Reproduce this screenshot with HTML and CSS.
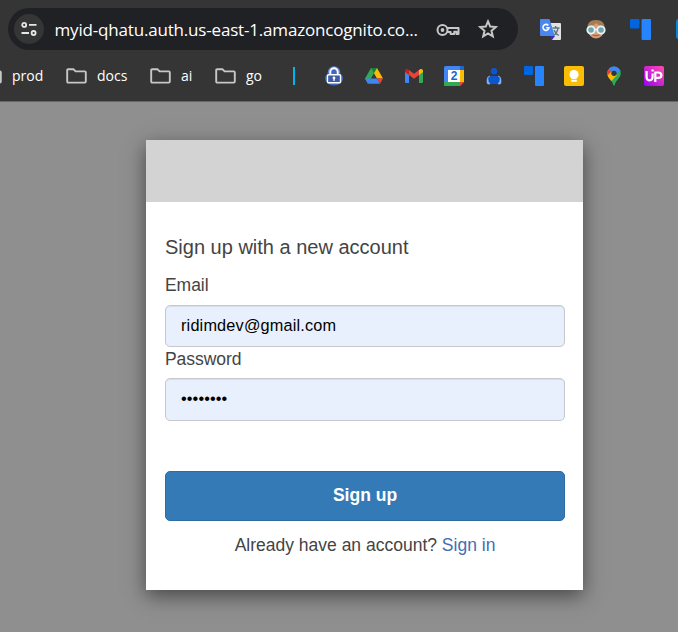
FILE: index.html
```html
<!DOCTYPE html>
<html lang="en">
<head>
<meta charset="utf-8">
<title>Signup</title>
<link rel="stylesheet" href="styles.css">
</head>
<body>
<svg class="defs" width="0" height="0">
  <symbol id="folder" viewBox="0 0 21 16"><path d="M1.2 2.2Q1.2 1.2 2.2 1.2H7.4L9.6 3.4H18.8Q19.8 3.4 19.8 4.4V13.6Q19.8 14.6 18.8 14.6H2.2Q1.2 14.6 1.2 13.6Z" fill="none" stroke="#c7c7c7" stroke-width="1.9"/></symbol>
  <symbol id="blocks" viewBox="0 0 20 20"><rect width="9" height="9" rx="1" fill="#0065e0"/><rect x="11" width="9" height="20" rx="1" fill="#2684ff"/></symbol>
</svg>
<header class="browser">
  <div class="toolbar">
    <div class="address">
      <span class="site-info">
        <svg width="16" height="16" viewBox="0 0 16 16" fill="none" stroke="#e6e6e6" stroke-width="1.8"><circle cx="3.2" cy="3.9" r="2"/><path d="M8 3.9H15.5M.5 12H8"/><circle cx="12.6" cy="12" r="2"/></svg>
      </span>
      <span class="url">myid-qhatu.auth.us-east-1.amazoncognito.co...</span>
      <svg class="key" width="24" height="14" viewBox="0 0 24 14" fill="none" stroke="#c7c7c7" stroke-width="2"><path d="M10.800 5H22.500V11H20.500V8.800H18.200V11H14.600V9H10.800" stroke-linejoin="round"/><circle cx="6.500" cy="7" r="5"/><circle cx="6.500" cy="7" r="1.900" fill="#c7c7c7" stroke="none"/></svg>
      <svg class="star" width="20" height="20" viewBox="0 0 20 20"><path d="M10 2.400L12.200 7.600L17.800 8.100L13.500 11.800L14.800 17.300L10 14.400L5.200 17.300L6.500 11.800L2.200 8.100L7.800 7.600Z" fill="none" stroke="#c7c7c7" stroke-width="2"/></svg>
    </div>
    <div class="extensions">
      <svg width="21" height="21" viewBox="0 0 21 21"><path d="M9 4H20Q21 4 21 5V20Q21 21 20 21H12Z" fill="#e2e2e2"/><path d="M12.5 9H19.500M15.7 7V9M18 9.2Q17 14.500 13.4 16.500M14 11Q15.2 14.500 18.8 16.500" fill="none" stroke="#5c7480" stroke-width="1.400"/><path d="M10 17H15L12 21Z" fill="#3929c0"/><path d="M1 0H9.500L14.8 17H1Q0 17 0 16V1Q0 0 1 0Z" fill="#4a86ee"/><path d="M8.300 6.400A3 3 0 1 0 9 8.700H6.200" fill="none" stroke="#fff" stroke-width="1.600"/></svg>
      <svg width="20" height="20" viewBox="0 0 20 20"><ellipse cx="10" cy="10.5" rx="8.3" ry="9" fill="#d9a078"/><path d="M1.3 10Q.7 1 10 1T18.7 10L16.5 7Q12 7 10.5 4Q8 7 3.5 7Z" fill="#a57c53"/><path d="M6 15.5Q10 18 14 15.5" stroke="#b4624d" stroke-width="1.3" fill="none"/><g fill="#71a4b0" stroke="#e5f6f7" stroke-width="1.800"><circle cx="5" cy="11" r="3.700"/><circle cx="15" cy="11" r="3.700"/></g><path d="M8.5 10.5H11.5" stroke="#e5f6f7" stroke-width="1.6"/></svg>
      <svg width="21" height="21"><use href="#blocks"/></svg>
      <svg width="20" height="20"><rect width="20" height="20" rx="2.5" fill="#0b84d8"/></svg>
    </div>
  </div>
  <nav class="bookmarks">
    <span class="folder f-prod"><svg width="21" height="16"><use href="#folder"/></svg><span class="name">prod</span></span>
    <span class="folder f-docs"><svg width="21" height="16"><use href="#folder"/></svg><span class="name">docs</span></span>
    <span class="folder f-ai"><svg width="21" height="16"><use href="#folder"/></svg><span class="name">ai</span></span>
    <span class="folder f-go"><svg width="21" height="16"><use href="#folder"/></svg><span class="name">go</span></span>
    <span class="divider"></span>
    <div class="apps">
      <svg width="20" height="20" viewBox="0 0 20 20"><circle cx="10" cy="6.500" r="6.300" fill="#5f84cf"/><ellipse cx="10" cy="12.500" rx="9" ry="6.900" fill="#4068bd"/><path d="M6.300 9V6A3.700 3.700 0 0 1 13.700 6V9" fill="#4068bd" stroke="#fff" stroke-width="1.900"/><rect x="3.500" y="8.800" width="13" height="8" rx="1" fill="#284c9c" stroke="#fff" stroke-width="1.500"/><path d="M5 11H15M5 13H15M5 15H15" stroke="#607dbc" stroke-width=".7"/><circle cx="10" cy="12" r="1.400" fill="#fff"/><path d="M10 12V15" stroke="#fff" stroke-width="1.200"/></svg>
      <svg width="20" height="20" viewBox="0 0 20 20"><path d="M7 2H13L10 7.2L4 17.7L1 12.5Z" fill="#34a853"/><path d="M7 2H13L10 7.2Z" fill="#188038"/><path d="M13 2L19 12.5H13L10 7.2Z" fill="#fbbc04"/><path d="M4 17.7L7 12.5H13L16 17.7Z" fill="#4285f4"/><path d="M1 12.5H7L4 17.7Z" fill="#4285f4"/><path d="M13 12.5H19L16 17.7Z" fill="#ea4335"/></svg>
      <svg width="20" height="20" viewBox="0 0 20 20"><path d="M1 5V16Q1 17 2 17H5V8Z" fill="#4285f4"/><path d="M15 8V17H18Q19 17 19 16V5Z" fill="#34a853"/><path d="M5 4L10 7.8L15 4V9L10 12.7L5 9Z" fill="#ea4335"/><path d="M1 5Q1 3 3 3Q4 3 5 4V9L1 6Z" fill="#c5221f"/><path d="M19 5Q19 3 17 3Q16 3 15 4V9L19 6Z" fill="#fbbc04"/></svg>
      <svg width="20" height="20" viewBox="0 0 20 20"><rect width="20" height="20" rx="1.5" fill="#4285f4"/><path d="M16 4H20V16H16Z" fill="#fbbc04"/><path d="M0 16H16V20H1.5Q0 20 0 18.5Z" fill="#34a853"/><path d="M16 0H18.5Q20 0 20 1.5V4H16Z" fill="#1967d2"/><path d="M20 16V20H16Z" fill="#353535"/><path d="M16 16H20L16 20Z" fill="#ea4335"/><path d="M4 4H16V16H4Z" fill="#fff"/><text x="10" y="14.2" text-anchor="middle" class="day">2</text></svg>
      <svg width="20" height="20" viewBox="0 0 20 20"><path d="M7 10H13Q17.500 10.500 16.500 18H3.500Q2.500 10.500 7 10Z" fill="#0b57d0"/><path d="M6 10Q3 10.500 4 14Q4 16 6 18H4Q3 18 3 16V14Q3 10.500 6 10ZM14 10Q17 10.500 16 14Q16 16 14 18H16Q17 18 17 16V14Q17 10.500 14 10Z" fill="#8ab4f8" stroke="#8ab4f8" stroke-width=".6"/><circle cx="10" cy="5.200" r="3.200" fill="#0b57d0"/></svg>
      <svg width="20" height="20"><use href="#blocks"/></svg>
      <svg width="20" height="20" viewBox="0 0 20 20"><rect width="20" height="20" rx="2" fill="#fbbc04"/><circle cx="10" cy="8.500" r="4.600" fill="#fff"/><path d="M7.200 10H12.800V12.500H7.200ZM7.200 13.800H12.800V15.700H7.200Z" fill="#fff"/></svg>
      <svg width="20" height="20" viewBox="0 0 20 20"><defs><clipPath id="pin"><path d="M10 .5A6.800 6.800 0 0 1 16.800 7.300C16.800 12 11.500 14.500 10.800 18.800Q10 20.500 9.200 18.800C8.500 14.500 3.200 12 3.200 7.300A6.800 6.800 0 0 1 10 .5Z"/></clipPath></defs><g clip-path="url(#pin)"><path d="M0 0H20V20H0Z" fill="#34a853"/><path d="M0 0H8L10 7L5 13L0 12Z" fill="#ea4335"/><path d="M5 0H20V3L10 9L4.500 2.500Z" fill="#4285f4"/><path d="M2 11L7 6L13 9L6.500 16Z" fill="#fbbc04"/></g><circle cx="10" cy="7.300" r="2.600" fill="#353535"/></svg>
      <svg width="20" height="20" viewBox="0 0 20 20"><defs><linearGradient id="up" x1="0" y1="1" x2="1" y2="0"><stop stop-color="#9b00f5"/><stop offset="1" stop-color="#ff4fac"/></linearGradient></defs><rect width="20" height="20" rx="2" fill="url(#up)"/><path d="M2.600 5V11Q2.600 14.300 5.500 14.300T8.600 11V7.500M8.600 3.500V5.500M11.300 16V6.500H14.200Q17.400 6.500 17.400 9.200T14.200 11.900H11.500" fill="none" stroke="#fff" stroke-width="2.200"/></svg>
    </div>
  </nav>
</header>
<main class="page">
  <section class="modal">
    <div class="banner"></div>
    <form class="form">
      <h1 class="title">Sign up with a new account</h1>
      <label class="label" for="email">Email</label>
      <input class="field email" id="email" type="text" value="ridimdev@gmail.com">
      <label class="label" for="password">Password</label>
      <input class="field password" id="password" type="password" value="password">
      <button class="submit" type="button">Sign up</button>
      <p class="signin">Already have an account? <a class="link" href="#">Sign in</a></p>
    </form>
  </section>
</main>
</body>
</html>
```

FILE: styles.css
```css
* { box-sizing: border-box; }
body { margin: 0; width: 678px; height: 632px; overflow: hidden; background: #8f8f8f; font-family: "Liberation Sans", Arial, sans-serif; color: #444; }
svg { display: block; flex: none; }
.defs { position: absolute; }

.browser { height: 102px; background: #353535; border-bottom: 1px solid #666; color: #fff; font-family: "Open Sans", "Noto Sans", sans-serif; overflow: hidden; }
.toolbar { display: flex; padding-top: 8px; height: 50px; }
.address { display: flex; align-items: center; flex: none; width: 510px; height: 42px; margin-left: 8px; border-radius: 21px; background: #202124; }
.site-info { display: flex; align-items: center; justify-content: center; width: 30px; height: 30px; margin-left: 6px; border-radius: 50%; background: #353535; }
.url { flex: none; width: 381px; margin-left: 10.5px; font-size: 17px; letter-spacing: -0.18px; white-space: nowrap; }
.key { margin-top: 1px; }
.star { margin-left: 18px; }
.extensions { display: flex; gap: 24.5px; flex: none; padding: 11px 0 0 22px; }

.bookmarks { display: flex; align-items: center; height: 52px; font-size: 14px; }
.folder { display: flex; align-items: center; gap: 10px; flex: none; }
.name { padding-bottom: 2px; }
.f-prod { width: 85px; margin-left: -19px; }
.f-docs { width: 84px; }
.f-ai { width: 65px; }
.f-go { width: 78px; }
.divider { flex: none; width: 2px; height: 18px; background: #00b5e9; }
.apps { display: flex; gap: 20px; margin-left: 29px; }
.day { font: bold 12px "Liberation Sans", Arial, sans-serif; fill: #1967d2; }

.page { display: flex; justify-content: flex-start; padding: 38px 0 0 146px; }
.modal { width: 437px; height: 450px; background: #fff; box-shadow: 0 6px 19px rgba(0, 0, 0, .5); }
.banner { height: 62px; background: #d3d3d3; }
.form { display: flex; flex-direction: column; padding: 32px 18px 0 19px; }
.title { margin: 0; font-size: 20px; font-weight: 400; line-height: 26px; }
.label { font-size: 17.5px; line-height: 25px; letter-spacing: -0.05px; }
.title + .label { margin-top: 13px; }
.field { width: 400px; padding: 0 15px 2px; border: 1px solid #c8c8cc; border-radius: 5px; background: #e8effd; box-shadow: inset 0 1px 1px rgba(0, 0, 0, .075); font: 16.3px "Liberation Sans", Arial, sans-serif; color: #000; }
.email { height: 42px; margin-top: 7px; letter-spacing: 0.17px; }
.password { height: 43px; margin-top: 6px; letter-spacing: 0.1px; }
.submit { height: 50px; margin-top: 50px; padding: 0 0 2px; border: 1px solid #2e6da4; border-radius: 5px; background: #337ab7; color: #fff; font: bold 17.5px "Liberation Sans", Arial, sans-serif; }
.signin { margin: 12px 0 0; font-size: 17.5px; line-height: 25px; text-align: center; }
.link { color: #426eb4; text-decoration: none; }
```
